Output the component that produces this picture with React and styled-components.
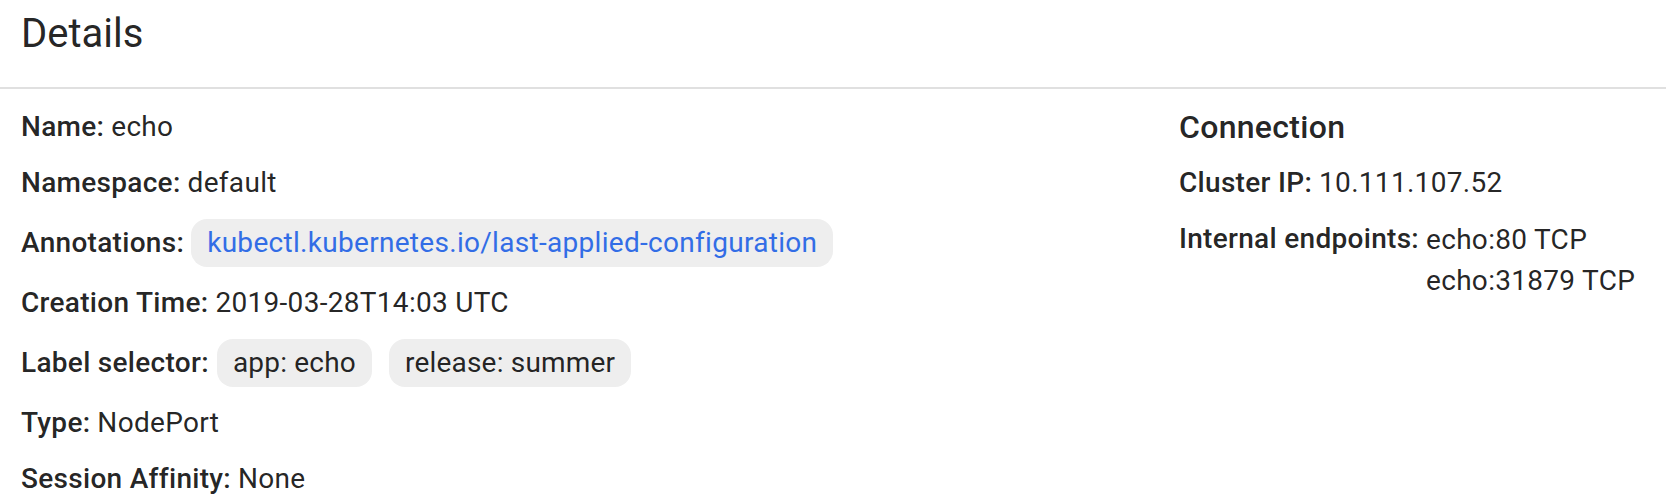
import React from "react";
import styled, { createGlobalStyle } from "styled-components";

const GlobalStyle = createGlobalStyle`
  html, body {
    margin: 0;
    padding: 0;
    background: #ffffff;
  }
  body {
    font-family: Roboto, "Liberation Sans", Arial, sans-serif;
    color: rgba(0, 0, 0, 0.87);
    -webkit-font-smoothing: antialiased;
  }
`;

const Card = styled.section`
  width: 1666px;
  background: #ffffff;
`;

const Header = styled.header`
  height: 87px;
  box-sizing: content-box;
  padding: 0 21px;
  border-bottom: 2px solid #e0e0e0;
  display: flex;
  align-items: flex-start;
`;

const Title = styled.h2`
  margin: 14px 0 0;
  font-size: 40px;
  line-height: 40px;
  font-weight: 400;
  color: rgba(0, 0, 0, 0.87);
`;

const Body = styled.div`
  display: grid;
  grid-template-columns: minmax(0, 1fr) 466px;
  padding: 17px 21px 0;
`;

const Column = styled.div`
  display: flex;
  flex-direction: column;
  gap: 14px;
`;

const Row = styled.div`
  display: flex;
  align-items: ${(p) => (p.$chips ? "center" : "flex-start")};
  min-height: ${(p) => (p.$chips ? "50px" : "42px")};
  font-size: 28px;
  line-height: 42px;
  letter-spacing: 0.3px;
  white-space: nowrap;
`;

const Label = styled.span`
  font-weight: 500;
  margin-right: ${(p) => (p.$gap ? p.$gap : "7px")};
`;

const Value = styled.span`
  font-weight: 400;
`;

const ValueList = styled.div`
  display: flex;
  flex-direction: column;
  line-height: 41px;
  padding-top: 0.5px;
`;

const ChipList = styled.div`
  display: flex;
  gap: 17px;
`;

const Chip = styled.span`
  display: inline-flex;
  align-items: center;
  height: 48px;
  padding: 0 16px;
  border-radius: 16px;
  background: #eeeeee;
  font-size: 28px;
  letter-spacing: ${(p) => (p.$link ? "0.3px" : "0.2px")};
  color: ${(p) => (p.$link ? "#326de6" : "rgba(0, 0, 0, 0.87)")};
`;

const SectionTitle = styled.h3`
  margin: 0;
  font-size: 32px;
  line-height: 42px;
  font-weight: 500;
  letter-spacing: 0.3px;
  color: rgba(0, 0, 0, 0.87);
`;

export default function App() {
  return (
    <>
      <GlobalStyle />
      <Card>
        <Header>
          <Title>Details</Title>
        </Header>
        <Body>
          <Column>
            <Row>
              <Label>Name:</Label>
              <Value>echo</Value>
            </Row>
            <Row>
              <Label>Namespace:</Label>
              <Value>default</Value>
            </Row>
            <Row $chips>
              <Label $gap="7px">Annotations:</Label>
              <ChipList>
                <Chip $link>kubectl.kubernetes.io/last-applied-configuration</Chip>
              </ChipList>
            </Row>
            <Row>
              <Label>Creation Time:</Label>
              <Value>2019-03-28T14:03 UTC</Value>
            </Row>
            <Row $chips>
              <Label $gap="8px">Label selector:</Label>
              <ChipList>
                <Chip>app: echo</Chip>
                <Chip>release: summer</Chip>
              </ChipList>
            </Row>
            <Row>
              <Label>Type:</Label>
              <Value>NodePort</Value>
            </Row>
            <Row>
              <Label>Session Affinity:</Label>
              <Value>None</Value>
            </Row>
          </Column>
          <Column>
            <SectionTitle>Connection</SectionTitle>
            <Row>
              <Label>Cluster IP:</Label>
              <Value>10.111.107.52</Value>
            </Row>
            <Row>
              <Label>Internal endpoints:</Label>
              <ValueList>
                <Value>echo:80 TCP</Value>
                <Value>echo:31879 TCP</Value>
              </ValueList>
            </Row>
          </Column>
        </Body>
      </Card>
    </>
  );
}
